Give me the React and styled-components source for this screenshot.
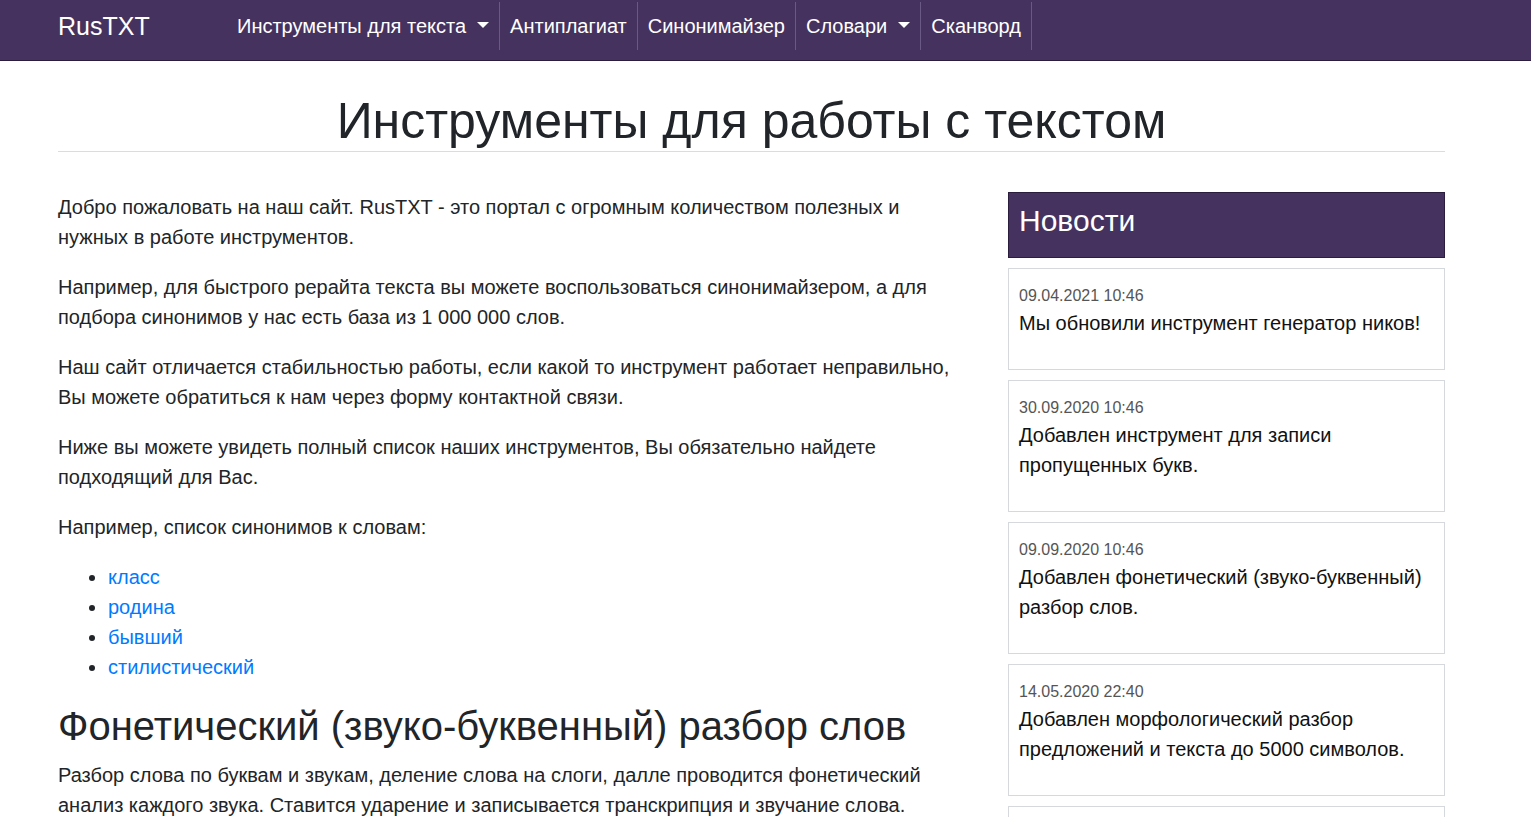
import React from "react";
import styled, { createGlobalStyle } from "styled-components";

const Global = createGlobalStyle`
  html, body { margin: 0; padding: 0; background: #fff; }
  body {
    font-family: "Liberation Sans", Arial, sans-serif;
    color: #212529;
    font-size: 20px;
    line-height: 1.5;
  }
  * { box-sizing: border-box; }
`;

const Navbar = styled.nav`
  background: #45325f;
  border-bottom: 1px solid #2b1d3d;
  height: 61px;
  padding: 2px 0 0;
`;

const NavInner = styled.div`
  width: 1387px;
  margin-left: 58px;
  display: flex;
  align-items: center;
  height: 48px;
`;

const Brand = styled.a`
  color: #fff;
  font-size: 25px;
  text-decoration: none;
  width: 169px;
  line-height: 48px;
`;

const NavList = styled.ul`
  list-style: none;
  margin: 0;
  padding: 0;
  display: flex;
  height: 48px;
`;

const NavItem = styled.li`
  display: flex;
  align-items: center;
  height: 48px;
  padding: 0 10px;
  border-right: 1px solid #6a5985;
  color: #fff;
  font-size: 20px;
  white-space: nowrap;
  cursor: pointer;
  ${(p) =>
    p.$dropdown &&
    `
    &::after {
      content: "";
      display: inline-block;
      margin-left: 11px;
      border-top: 6px solid #fff;
      border-left: 6px solid transparent;
      border-right: 6px solid transparent;
      position: relative;
      top: -1px;
    }
  `}
`;

const Container = styled.main`
  width: 1387px;
  margin-left: 58px;
`;

const Title = styled.h1`
  margin: 31px 0 0;
  font-size: 50px;
  font-weight: 400;
  line-height: 59px;
  text-align: center;
  color: #212529;
  border-bottom: 1px solid #dcdcdc;
`;

const Row = styled.div`
  display: grid;
  grid-template-columns: 1fr 437px;
  column-gap: 48px;
  margin-top: 40px;
`;

const Content = styled.div``;

const P = styled.p`
  margin: 0 0 20px;
`;

const List = styled.ul`
  margin: 0 0 20px;
  padding-left: 50px;
`;

const Link = styled.a`
  color: #007bff;
  text-decoration: none;
`;

const H2 = styled.h2`
  margin: 0 0 10px;
  font-size: 40px;
  font-weight: 400;
  line-height: 48px;
`;

const Sidebar = styled.aside`
  display: flex;
  flex-direction: column;
  gap: 10px;
`;

const NewsHeader = styled.div`
  background: #45325f;
  border: 1px solid #2b1d3d;
  color: #fff;
  font-size: 30px;
  line-height: 54px;
  height: 66px;
  padding: 1px 10px 9px;
`;

const Card = styled.div`
  border: 1px solid #d5d8dc;
  padding: 15px 10px 16px;
`;

const Date = styled.div`
  font-size: 16px;
  line-height: 24px;
  color: #555;
`;

const CardText = styled.p`
  margin: 0 0 15px;
  font-size: 20px;
  line-height: 30px;
  color: #111;
`;

const navItems = [
  { label: "Инструменты для текста", dropdown: true },
  { label: "Антиплагиат" },
  { label: "Синонимайзер" },
  { label: "Словари", dropdown: true },
  { label: "Сканворд" },
];

const news = [
  { date: "09.04.2021 10:46", text: "Мы обновили инструмент генератор ников!" },
  { date: "30.09.2020 10:46", text: "Добавлен инструмент для записи пропущенных букв." },
  { date: "09.09.2020 10:46", text: "Добавлен фонетический (звуко-буквенный) разбор слов." },
  { date: "14.05.2020 22:40", text: "Добавлен морфологический разбор предложений и текста до 5000 символов." },
  { date: "01.04.2020 12:00", text: "Добавлен инструмент подсчёта символов в тексте." },
];

const words = ["класс", "родина", "бывший", "стилистический"];

export default function App() {
  return (
    <>
      <Global />
      <Navbar>
        <NavInner>
          <Brand href="#">RusTXT</Brand>
          <NavList>
            {navItems.map((n) => (
              <NavItem key={n.label} $dropdown={n.dropdown}>
                {n.label}
              </NavItem>
            ))}
          </NavList>
        </NavInner>
      </Navbar>
      <Container>
        <Title>Инструменты для работы с текстом</Title>
        <Row>
          <Content>
            <P>
              Добро пожаловать на наш сайт. RusTXT - это портал с огромным количеством полезных и
              нужных в работе инструментов.
            </P>
            <P>
              Например, для быстрого рерайта текста вы можете воспользоваться синонимайзером, а для
              подбора синонимов у нас есть база из 1 000 000 слов.
            </P>
            <P>
              Наш сайт отличается стабильностью работы, если какой то инструмент работает неправильно,
              Вы можете обратиться к нам через форму контактной связи.
            </P>
            <P>
              Ниже вы можете увидеть полный список наших инструментов, Вы обязательно найдете
              подходящий для Вас.
            </P>
            <P>Например, список синонимов к словам:</P>
            <List>
              {words.map((w) => (
                <li key={w}>
                  <Link href="#">{w}</Link>
                </li>
              ))}
            </List>
            <H2>Фонетический (звуко-буквенный) разбор слов</H2>
            <P>
              Разбор слова по буквам и звукам, деление слова на слоги, далле проводится фонетический
              анализ каждого звука. Ставится ударение и записывается транскрипция и звучание слова.
            </P>
          </Content>
          <Sidebar>
            <NewsHeader>Новости</NewsHeader>
            {news.map((n) => (
              <Card key={n.date}>
                <Date>{n.date}</Date>
                <CardText>{n.text}</CardText>
              </Card>
            ))}
          </Sidebar>
        </Row>
      </Container>
    </>
  );
}
